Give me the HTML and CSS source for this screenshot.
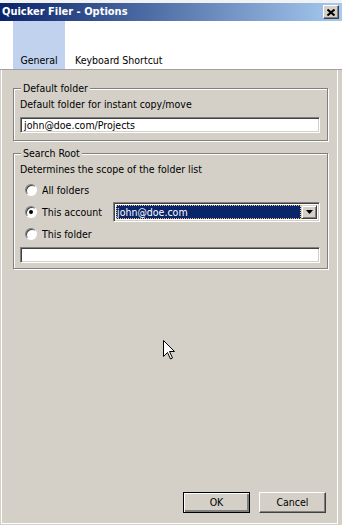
FILE: index.html
```html
<!DOCTYPE html>
<html lang="en">
<head>
  <meta charset="UTF-8">
  <title>Quicker Filer - Options</title>
  <link rel="stylesheet" href="styles.css">
</head>
<body>
  <div class="window">
    <div class="top-strip"></div>

    <div class="titlebar">
      <span class="title">Quicker Filer - Options</span>
      <div class="close-btn">
        <svg width="8" height="7" viewBox="0 0 8 7">
          <path d="M0.5 0.5 L7.5 6.5 M7.5 0.5 L0.5 6.5" stroke="#000" stroke-width="2"/>
        </svg>
      </div>
    </div>

    <div class="tabs">
      <div class="tab active">General</div>
      <div class="tab">Keyboard Shortcut</div>
    </div>

    <div class="page">
      <fieldset class="group">
        <legend>Default folder</legend>
        <div class="hint">Default folder for instant copy/move</div>
        <div class="textbox">john@doe.com/Projects</div>
      </fieldset>

      <fieldset class="group search-root">
        <legend>Search Root</legend>
        <div class="hint">Determines the scope of the folder list</div>
        <div class="radio-row">
          <span class="radio"></span>
          <span class="radio-label">All folders</span>
        </div>
        <div class="radio-row">
          <span class="radio checked"></span>
          <span class="radio-label wide">This account</span>
          <div class="combo">
            <span class="combo-value">john@doe.com</span>
            <span class="combo-btn">
              <svg width="7" height="4" viewBox="0 0 7 4"><path d="M0 0 H7 L3.5 4 Z" fill="#000"/></svg>
            </span>
          </div>
        </div>
        <div class="radio-row">
          <span class="radio"></span>
          <span class="radio-label">This folder</span>
        </div>
        <div class="textbox empty"></div>
      </fieldset>

      <div class="spacer"></div>

      <div class="button-row">
        <div class="btn default">OK</div>
        <div class="btn">Cancel</div>
      </div>

      <!-- mouse pointer left in the screenshot -->
      <svg class="pointer" width="12" height="20" viewBox="0 0 12 20">
        <path d="M0.5 0.5 V16.5 L4.5 12.5 L7.5 19 L9.5 18 L6.5 11.5 H11.5 Z" fill="#fff" stroke="#000" stroke-width="1"/>
      </svg>
    </div>
  </div>
</body>
</html>
```

FILE: styles.css
```css
* {
  margin: 0;
  padding: 0;
  box-sizing: border-box;
}

body {
  width: 342px;
  height: 525px;
  overflow: hidden;
  font-family: "DejaVu Sans Condensed", "DejaVu Sans", sans-serif;
  font-size: 10.5px;
  color: #000;
  background-color: #d4d0c8;
}

.window {
  display: flex;
  flex-direction: column;
  height: 525px;
  background-color: #d4d0c8;
}

.top-strip {
  height: 3px;
  background-color: #f2f2f2;
}

/* title bar */
.titlebar {
  display: flex;
  align-items: center;
  height: 18px;
  padding: 0 3px 0 2px;
  background: linear-gradient(to right, #0a246a, #a6caf0);
}

.title {
  flex: 1;
  color: #fff;
  font-weight: bold;
  font-size: 11px;
  line-height: 18px;
}

.close-btn {
  display: flex;
  align-items: center;
  justify-content: center;
  width: 16px;
  height: 14px;
  background-color: #d4d0c8;
  border: 1px solid;
  border-color: #fff #404040 #404040 #fff;
  box-shadow: inset -1px -1px 0 #808080;
}

/* tabs */
.tabs {
  display: flex;
  height: 49px;
  background-color: #fff;
  border-bottom: 1px solid #a0a0a0;
}

.tab {
  display: flex;
  align-items: flex-end;
  padding-bottom: 2px;
  line-height: 13px;
  color: #000;
}

.tab.active {
  justify-content: center;
  width: 52px;
  margin-left: 13px;
  margin-right: 10px;
  background-color: #c1d2ee;
}

/* tab page */
.page {
  position: relative;
  flex: 1;
  display: flex;
  flex-direction: column;
  margin: 0 4px 1px 1px;
  padding: 12px 8px 0 11px;
  border-left: 1px solid #fff;
  border-right: 1px solid #fff;
  border-bottom: 1px solid #fff;
}

.group {
  border: 1px solid #808080;
  box-shadow: inset 1px 1px 0 #fff, 1px 1px 0 #fff;
  padding: 0 7px 7px 6px;
  margin: 0 1px 0 0;
}

.group legend {
  margin-left: 1px;
  padding: 0 2px;
  line-height: 13px;
  background-color: #d4d0c8;
}

.hint {
  line-height: 13px;
  margin-top: 3px;
}

.textbox {
  height: 16px;
  margin-top: 6px;
  padding-left: 3px;
  line-height: 12px;
  background-color: #fff;
  border: 1px solid;
  border-color: #808080 #fff #fff #808080;
  box-shadow: inset 1px 1px 0 #404040, inset -1px -1px 0 #d4d0c8;
  padding-top: 1px;
}

.search-root {
  margin-top: 6px;
  padding-bottom: 5px;
}

.search-root .hint {
  margin-bottom: 3px;
}

.search-root .textbox.empty {
  margin-top: 2px;
}

.radio-row {
  display: flex;
  align-items: center;
  height: 22px;
}

.radio {
  position: relative;
  width: 12px;
  height: 12px;
  margin-left: 5px;
  margin-right: 5px;
  border-radius: 50%;
  background-color: #fff;
  border: 1px solid;
  border-color: #808080 #fff #fff #808080;
  box-shadow: inset 1px 1px 0 #404040;
}

.radio.checked::after {
  content: '';
  position: absolute;
  left: 3px;
  top: 3px;
  width: 4px;
  height: 4px;
  border-radius: 50%;
  background-color: #000;
}

.radio-label {
  line-height: 13px;
}

.radio-label.wide {
  width: 71px;
}

.combo {
  flex: 1;
  display: flex;
  height: 20px;
  padding: 2px;
  background-color: #fff;
  border: 1px solid;
  border-color: #808080 #fff #fff #808080;
  box-shadow: inset 1px 1px 0 #404040, inset -1px -1px 0 #d4d0c8;
}

.combo-value {
  flex: 1;
  padding-left: 1px;
  line-height: 14px;
  color: #fff;
  background-color: #0a246a;
  outline: 1px dotted #f0c080;
  outline-offset: -1px;
}

.combo-btn {
  display: flex;
  align-items: center;
  justify-content: center;
  width: 16px;
  background-color: #d4d0c8;
  border: 1px solid;
  border-color: #d4d0c8 #404040 #404040 #d4d0c8;
  box-shadow: inset 1px 1px 0 #fff, inset -1px -1px 0 #808080;
}

.spacer {
  flex: 1;
}

/* OK / Cancel */
.button-row {
  display: flex;
  justify-content: flex-end;
  gap: 9px;
  margin-right: 3px;
  margin-bottom: 10px;
}

.btn {
  width: 67px;
  height: 21px;
  line-height: 19px;
  text-align: center;
  border: 1px solid;
  border-color: #fff #404040 #404040 #fff;
  box-shadow: inset -1px -1px 0 #808080;
}

.btn.default {
  border-color: #000;
  box-shadow: inset 1px 1px 0 #fff, inset -2px -2px 0 #808080;
}

.pointer {
  position: absolute;
  left: 161px;
  top: 270px;
}
```
